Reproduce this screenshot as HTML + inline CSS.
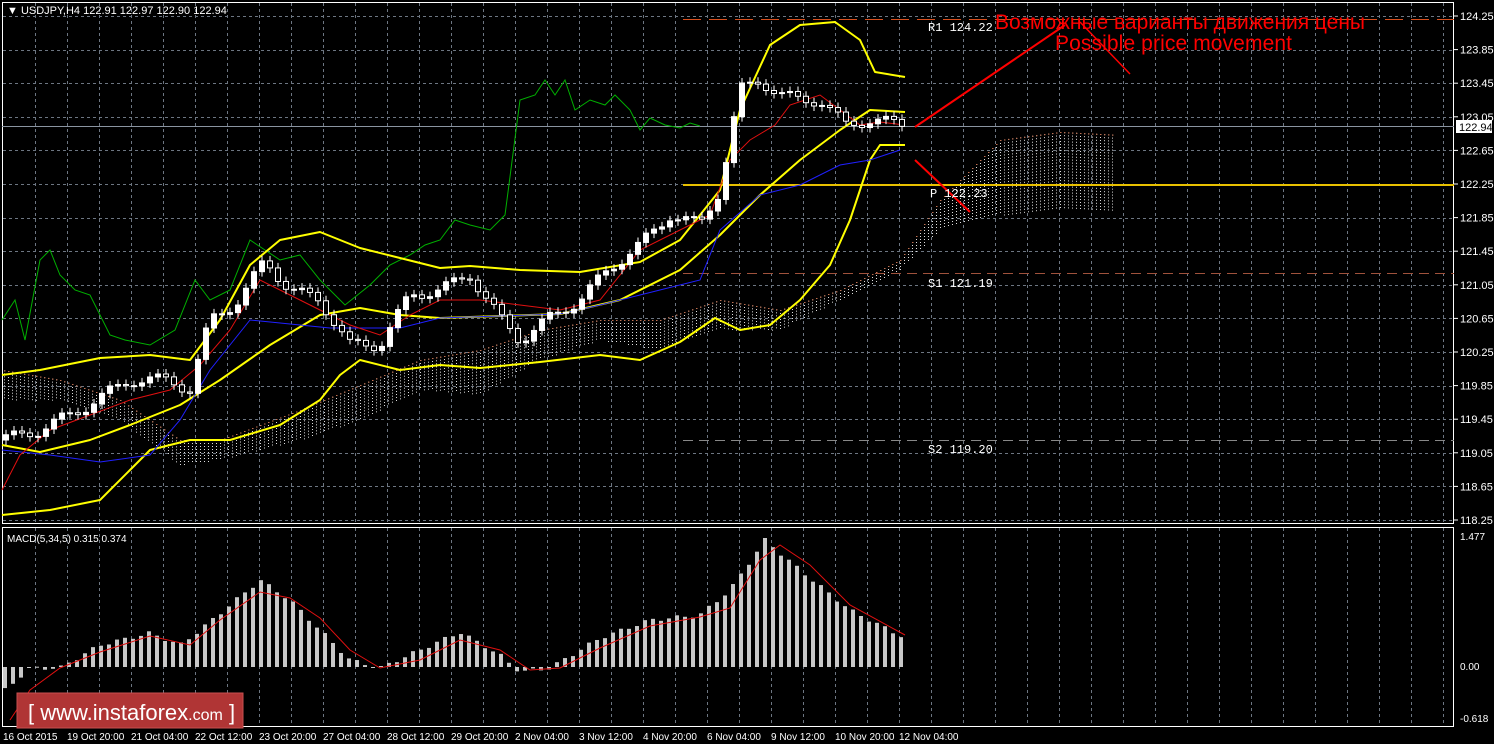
<!DOCTYPE html><html><head><meta charset="utf-8"><style>
html,body{margin:0;padding:0;background:#000;width:1494px;height:744px;overflow:hidden}
svg{display:block}
text{font-family:"Liberation Sans",sans-serif;font-size:11px;fill:#fff}
.m{font-family:"Liberation Mono",monospace;font-size:12px}
</style></head><body>
<svg id="s" width="1494" height="744" xmlns="http://www.w3.org/2000/svg">
<rect width="1494" height="744" fill="#000"/>
<g id="grid" stroke="#6d7682" stroke-dasharray="3,3" stroke-width="1"></g>
<rect x="2.5" y="2.5" width="1451" height="521" fill="none" stroke="#fff"/>
<rect x="2.5" y="527.5" width="1451" height="199" fill="none" stroke="#fff"/>
<g id="cloud"></g>
<line x1="683" y1="19.5" x2="1454" y2="19.5" stroke="#d9501e" stroke-dasharray="18,8"/>
<line x1="683" y1="185" x2="1454" y2="185" stroke="#e8c000" stroke-width="2"/>
<line x1="683" y1="273.5" x2="1454" y2="273.5" stroke="#a0523c" stroke-dasharray="10,6"/>
<line x1="683" y1="440.5" x2="1454" y2="440.5" stroke="#888" stroke-dasharray="10,6"/>
<line x1="2" y1="126.5" x2="1454" y2="126.5" stroke="#8a94a0"/>
<polyline fill="none" stroke="#00b000" stroke-width="1" points="2,320 15,300 25,340 40,260 50,250 60,275 75,290 90,295 110,335 125,340 150,345 175,330 195,280 210,300 230,290 250,240 265,250 280,260 300,255 320,280 345,305 370,285 390,265 410,255 425,245 440,240 455,220 470,225 490,230 505,215 520,100 535,95 545,80 555,95 565,80 575,110 590,100 605,105 615,95 630,110 640,130 650,118 665,125 680,128 690,123 700,126"/>
<polyline fill="none" stroke="#ffff00" stroke-width="2" stroke-linejoin="round" points="2,375 40,370 100,358 150,355 190,360 220,320 250,265 280,240 320,232 360,248 400,258 440,268 470,266 520,270 580,272 640,262 680,240 720,190 740,110 770,45 800,25 835,22 860,40 875,72 905,77"/>
<polyline fill="none" stroke="#ffff00" stroke-width="2" stroke-linejoin="round" points="2,515 50,510 100,500 130,470 150,450 190,440 230,440 280,425 320,400 340,375 360,360 400,370 440,365 480,368 540,362 600,355 640,360 680,342 715,318 740,330 770,325 800,300 830,265 850,220 870,160 880,145 905,145"/>
<polyline fill="none" stroke="#ffff00" stroke-width="2" stroke-linejoin="round" points="2,445 40,452 90,440 130,425 180,405 220,380 270,345 320,315 360,308 400,315 440,318 500,316 560,314 620,300 680,270 720,235 760,195 800,160 840,130 870,110 905,112"/>
<polyline fill="none" stroke="#2020ff" stroke-width="1" points="2,450 50,455 100,462 150,455 180,420 210,370 250,320 300,325 330,328 400,328 440,318 500,316 560,314 600,305 640,295 700,280 720,230 760,195 800,185 840,165 870,160 900,150"/>
<polyline fill="none" stroke="#e01010" stroke-width="1" points="2,490 20,455 50,430 90,415 130,400 170,390 200,365 230,330 260,280 290,295 320,310 350,325 380,335 410,315 440,300 480,300 520,305 560,310 600,300 640,250 680,230 710,215 730,160 750,140 775,125 790,105 820,95 840,110 860,125 880,122 905,125"/>
<g id="candles"></g>
<g id="macd"></g>
<polyline fill="none" stroke="#e01010" stroke-width="1" points="10,720 30,690 60,668 100,652 150,636 190,645 220,620 260,592 290,598 320,618 350,650 380,668 420,660 460,640 500,650 530,670 560,668 600,648 650,626 700,617 730,608 760,560 780,545 810,565 850,605 905,635"/>
<line x1="915" y1="127" x2="1065" y2="25" stroke="#f00" stroke-width="2"/>
<line x1="1080" y1="22" x2="1130" y2="74" stroke="#f00" stroke-width="1.5"/>
<line x1="915" y1="160" x2="970" y2="212" stroke="#f00" stroke-width="2"/>
<text x="995" y="29" style="font-size:21px;fill:#f00" textLength="370">Возможные варианты движения цены</text>
<text x="1055" y="50" style="font-size:21px;fill:#f00" textLength="237">Possible price movement</text>
<text class="m" x="928" y="31">R1 124.22</text>
<text class="m" x="930" y="197">P 122.23</text>
<text class="m" x="928" y="287">S1 121.19</text>
<text class="m" x="928" y="453">S2 119.20</text>
<text x="7" y="14"><tspan>▼</tspan> USDJPY,H4  122.91 122.97 122.90 122.94</text>
<text x="7" y="542" style="font-size:10px">MACD(5,34,5) 0.315 0.374</text>
<g id="ylab"></g>
<rect x="1456" y="120" width="36" height="13" fill="#fff"/>
<text x="1459" y="131" style="fill:#000">122.94</text>
<text x="1460" y="540" style="font-size:10px">1.477</text>
<text x="1460" y="670" style="font-size:10px">0.00</text>
<text x="1460" y="722" style="font-size:10px">-0.618</text>
<g id="xlab"></g>
<rect x="17" y="693" width="226" height="35" fill="#b03535" stroke="#c85050"/>
<text x="28" y="720" style="font-size:22px;fill:#fff">[  www.instaforex<tspan style="font-size:16px">.com</tspan> ]</text>
</svg>
<script>
(function(){
var NS="http://www.w3.org/2000/svg";
function el(p,t,a,txt){var e=document.createElementNS(NS,t);for(var k in a)e.setAttribute(k,a[k]);if(txt)e.textContent=txt;document.getElementById(p).appendChild(e);return e;}
for(var x=35;x<1454;x+=32){el('grid','line',{x1:x+.5,y1:3,x2:x+.5,y2:523});el('grid','line',{x1:x+.5,y1:528,x2:x+.5,y2:726});}
var pl=["124.25","123.85","123.45","123.05","122.65","122.25","121.85","121.45","121.05","120.65","120.25","119.85","119.45","119.05","118.65","118.25"];
for(var i=0;i<16;i++){var y=16+i*33.6;el('grid','line',{x1:3,y1:Math.round(y)+.5,x2:1454,y2:Math.round(y)+.5});el('ylab','text',{x:1460,y:y+4},pl[i]);el('ylab','line',{x1:1454,y1:y,x2:1458,y2:y,stroke:'#fff'});}
var xl=["16 Oct 2015","19 Oct 20:00","21 Oct 04:00","22 Oct 12:00","23 Oct 20:00","27 Oct 04:00","28 Oct 12:00","29 Oct 20:00","2 Nov 04:00","3 Nov 12:00","4 Nov 20:00","6 Nov 04:00","9 Nov 12:00","10 Nov 20:00","12 Nov 04:00"];
for(var i=0;i<15;i++){el('xlab','text',{x:3+i*64,y:740,style:'font-size:10px'},xl[i]);}
function interp(pts,x){for(var i=0;i<pts.length-1;i++){if(x>=pts[i][0]&&x<=pts[i+1][0]){var t=(x-pts[i][0])/(pts[i+1][0]-pts[i][0]);return pts[i][1]+t*(pts[i+1][1]-pts[i][1]);}}return pts[pts.length-1][1];}
var mp=[[5,690],[30,668],[60,668],[100,645],[150,633],[180,645],[200,630],[260,580],[290,600],[320,630],[350,660],[380,668],[420,650],[460,632],[500,655],[520,672],[550,668],[600,638],[650,620],[700,615],[730,590],[765,540],[800,570],[850,610],[905,638]];
for(var x=5;x<=905;x+=8){var y=interp(mp,x)+Math.sin(x)*2;var z=667;el('macd','rect',{x:x-2,y:Math.min(y,z),width:4,height:Math.max(1,Math.abs(z-y)),fill:'#c8c8c8'});}
var cp=[[2,440],[40,430],[80,410],[130,380],[170,380],[190,390],[210,320],[240,300],[265,260],[290,290],[320,300],[350,345],[380,345],[410,295],[440,290],[470,275],[500,318],[520,340],[550,318],[580,300],[610,268],[640,245],[670,215],[700,225],[720,190],[740,90],[760,80],[780,95],[800,100],[820,100],[845,125],[870,120],[905,125]];
var prev=interp(cp,2);
for(var x=6;x<=905;x+=8){var c=interp(cp,x)+Math.sin(x*1.7)*6;var o=prev;var tp=Math.min(o,c),h=Math.max(1,Math.abs(c-o));
el('candles','line',{x1:x,y1:tp-5,x2:x,y2:tp+h+5,stroke:'#fff'});
el('candles','rect',{x:x-2.5,y:tp,width:5,height:h,fill:c<o?'#fff':'#000',stroke:'#fff'});prev=c;}
var ca=[[2,370],[60,380],[120,400],[180,440],[220,440],[300,410],[360,385],[420,360],[480,350],[540,330],[600,320],[660,320],[720,300],[780,310],[840,290],[900,260],[940,200],[1000,140],[1060,132],[1120,135]];
var cb=[[2,400],[60,400],[120,420],[180,465],[220,460],[300,440],[360,420],[420,390],[480,395],[540,360],[600,340],[660,350],[720,330],[780,330],[840,300],[900,270],[940,230],[1000,215],[1060,210],[1120,210]];
for(var x=4;x<=1115;x+=4){var a=interp(ca,x),b=interp(cb,x);for(var y=Math.min(a,b);y<Math.max(a,b);y+=3)el('cloud','rect',{x:x,y:y,width:1,height:1,fill:'#ddd'});
el('cloud','rect',{x:x,y:a,width:1.5,height:1,fill:'#c07050'});}
})();
</script>
</body></html>
